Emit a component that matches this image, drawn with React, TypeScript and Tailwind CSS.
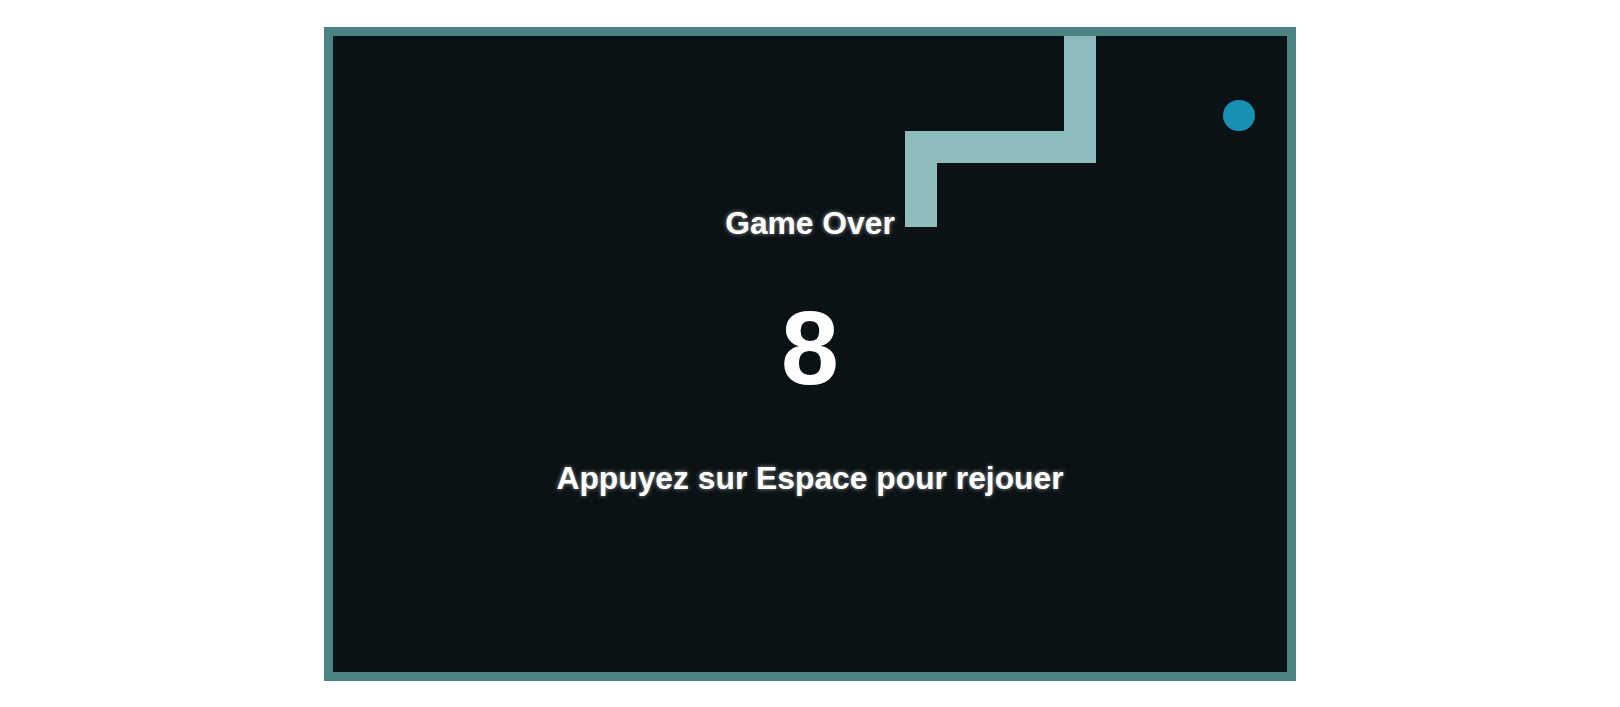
import React from "react";

const COLS = 30;
const ROWS = 20;
const CELL = 31.8;

type Point = { x: number; y: number };

// head is the bottom of the left column, tail runs off the top edge
const snake: Point[] = [
  { x: 18, y: 5 },
  { x: 18, y: 4 },
  { x: 18, y: 3 },
  { x: 19, y: 3 },
  { x: 20, y: 3 },
  { x: 21, y: 3 },
  { x: 22, y: 3 },
  { x: 23, y: 3 },
  { x: 23, y: 2 },
  { x: 23, y: 1 },
  { x: 23, y: 0 },
];

const food: Point = { x: 28, y: 2 };
const score = 8;

// snap cell edges to whole pixels so neighbouring cells don't leave seams
function cellBox(p: Point) {
  const left = Math.round(p.x * CELL);
  const top = Math.round(p.y * CELL);
  return {
    left,
    top,
    width: Math.round((p.x + 1) * CELL) - left,
    height: Math.round((p.y + 1) * CELL) - top,
  };
}

function Board() {
  const w = Math.round(COLS * CELL);
  const h = Math.round(ROWS * CELL);

  return (
    <div
      className="relative bg-[#0a1215] border-[9px] border-[#4a8381] box-content overflow-hidden"
      style={{ width: w, height: h }}
    >
      {snake.map((p, i) => (
        <div key={i} className="absolute bg-[#8cbcbb]" style={cellBox(p)} />
      ))}

      <div className="absolute rounded-full bg-[#1890b3]" style={cellBox(food)} />

      <div className="relative flex flex-col items-center text-white font-bold font-['Liberation_Sans',Arial,sans-serif]">
        <p className="mt-[172px] text-[31.8px] leading-none [text-shadow:0_0_4px_rgba(150,150,150,1)]">
          Game Over
        </p>
        <p className="mt-[57px] text-[104px] leading-none">{score}</p>
        <p className="mt-[63px] text-[31.8px] leading-none [text-shadow:0_0_4px_rgba(150,150,150,1)]">
          Appuyez sur Espace pour rejouer
        </p>
      </div>
    </div>
  );
}

export default function App() {
  return (
    <main className="flex h-[707px] w-full items-center justify-center bg-white">
      <Board />
    </main>
  );
}
